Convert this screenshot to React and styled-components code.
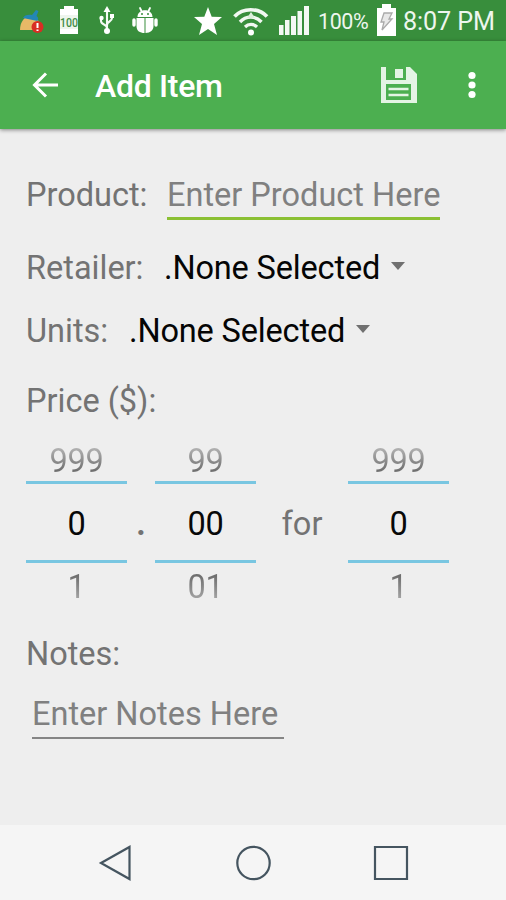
import React from 'react';
import styled, { createGlobalStyle } from 'styled-components';

const GlobalStyle = createGlobalStyle`
  * { box-sizing: border-box; }
  body { margin: 0; background: #eeeeee; font-family: Roboto, sans-serif; }
`;

const Screen = styled.div`
  display: flex;
  flex-direction: column;
  width: 506px;
  height: 900px;
  overflow: hidden;
  background: #eeeeee;
  color: #737373;
  font-size: 32.5px;
  line-height: 40px;
  white-space: nowrap;
`;

const StatusBar = styled.header`
  display: flex;
  align-items: flex-start;
  flex: none;
  height: 41px;
  padding-left: 19px;
  background: #388e3c;
  color: #eef6ee;
`;

const StatusIcon = styled.svg`
  display: block;
  flex: none;
  width: ${(p) => p.$w}px;
  height: 41px;
  margin-right: ${(p) => p.$gap}px;
`;

const StatusText = styled.span`
  flex: none;
  width: ${(p) => p.$w}px;
  margin-right: ${(p) => p.$gap || 0}px;
  padding-top: ${(p) => p.$top}px;
  font-size: ${(p) => p.$size}px;
  line-height: 30px;
  letter-spacing: ${(p) => p.$track || 0}px;
`;

const AppBar = styled.div`
  display: flex;
  align-items: center;
  flex: none;
  height: 88px;
  padding: 0 30px 0 32px;
  background: #4caf50;
  color: #fff;
  box-shadow: 0 1px 4px rgba(0, 0, 0, 0.45);
`;

const BarIcon = styled.svg`
  display: block;
  flex: none;
`;

const Title = styled.h1`
  flex: 1;
  margin: 1px 0 0 36px;
  font-size: 32px;
  font-weight: 500;
  line-height: 38px;
  letter-spacing: -0.3px;
`;

const MoreIcon = styled(BarIcon)`
  margin-left: 51px;
`;

const Form = styled.main`
  display: flex;
  flex-direction: column;
  flex: 1;
  padding: 46px 26px 0;
`;

const Row = styled.div`
  display: flex;
  align-items: flex-start;
  height: ${(p) => p.$h}px;
`;

const Label = styled.span`
  flex: none;
  width: ${(p) => (p.$w ? `${p.$w}px` : 'auto')};
`;

const Field = styled.div`
  width: ${(p) => p.$w}px;
  height: ${(p) => p.$h}px;
  border-bottom: ${(p) => (p.$focused ? '3px solid #8bc034' : '2px solid #858585')};
  color: #808080;
`;

const NotesField = styled(Field)`
  margin-left: 6px;
`;

const Select = styled.div`
  display: flex;
  align-items: flex-start;
  color: #050505;
`;

const SelectValue = styled.span`
  width: 227px;
  letter-spacing: -0.16px;
`;

const Caret = styled.svg`
  display: block;
  width: 14px;
  height: 8px;
  margin-top: 14px;
`;

const Pickers = styled.div`
  display: flex;
  height: 193px;
`;

const Picker = styled.div`
  display: flex;
  flex-direction: column;
  width: 101px;
  height: 164px;
  text-align: center;
  letter-spacing: -0.2px;
`;

const Faded = styled.span`
  height: 38px;
  color: transparent;
  background: linear-gradient(${(p) => (p.$down ? '#6c6c6c 20%, #a4a4a4 85%' : '#b0b0b0 20%, #686868 85%')});
  -webkit-background-clip: text;
  background-clip: text;
`;

const Current = styled.div`
  height: 82px;
  margin: 2px 0 4px;
  padding-top: 20px;
  border-top: 3px solid #79c6e1;
  border-bottom: 3px solid #79c6e1;
  color: #080808;
`;

const Joiner = styled.span`
  width: ${(p) => p.$w}px;
  padding-top: 63px;
  text-align: center;
  font-weight: ${(p) => (p.$bold ? 700 : 400)};
`;

const NavBar = styled.nav`
  display: flex;
  align-items: center;
  flex: none;
  height: 75px;
  padding: 0 97px 0 98px;
  background: #f5f5f5;
  justify-content: space-between;
`;

const NavIcon = styled.svg`
  display: block;
  width: 36px;
  height: 36px;
  fill: none;
  stroke: #455560;
  stroke-width: 2.2;
`;

function NumberPicker({ before, value, after }) {
  return (
    <Picker>
      <Faded>{before}</Faded>
      <Current>{value}</Current>
      <Faded $down>{after}</Faded>
    </Picker>
  );
}

function Dropdown({ value }) {
  return (
    <Select>
      <SelectValue>{value}</SelectValue>
      <Caret viewBox="0 0 14 8"><path d="M0 0h14L7 8z" fill="#707070" /></Caret>
    </Select>
  );
}

function StatusIcons() {
  return (
    <>
      <StatusIcon $w={26} $gap={13} viewBox="0 0 26 41">
        <path d="M1 30C1 22 5 18 8 17l11 3c2 4 0 8-2 10z" fill="#e8b967" />
        <path d="M4 18c1-3 6-4 9-3l4-5 2.500 1-2 5c2 1 2 3 1 5z" fill="#2387b5" />
        <circle cx="18.5" cy="27" r="6" fill="#d92d24" />
        <path d="M18.5 23v5M18.5 29.5v1.5" stroke="#fff" strokeWidth="2" />
      </StatusIcon>
      <StatusIcon $w={22} $gap={19} viewBox="0 0 22 41">
        <path d="M6 6h10v3h4v7H2V9h4zM2 28h18v6H2z" fill="#fff" />
        <path d="M2 15h18v14H2z" fill="#edf5ed" />
        <text x="11" y="26.500" textAnchor="middle" textLength="18" lengthAdjust="spacingAndGlyphs" fontSize="12" fontWeight="500" fill="#438c47">100</text>
      </StatusIcon>
      <StatusIcon $w={16} $gap={17} viewBox="20 0 16 41">
        <g fill="none" stroke="#f4faf4" strokeWidth="2.1">
          <path d="M28 12v18M28 28c0-4-6-3-6-7v-3M28 25c0-4 5-3 5-7v-2" />
        </g>
        <path d="M28 6l3.5 6h-7z" fill="#fff" />
        <circle cx="28" cy="31" r="3" fill="#fff" />
        <circle cx="22.5" cy="18" r="2.2" fill="#fff" />
        <path d="M31 14h4v4h-4z" fill="#fff" />
      </StatusIcon>
      <StatusIcon $w={26} $gap={36} viewBox="0 0 26 41">
        <path d="M5.500 17c0-9 15-9 15 0zM4.500 18h8v15C8 33 4.500 31 4.500 26zM13.500 18h8v8c0 4-3 7-8 7z" fill="#fff" />
        <path d="M8 8l2 4M18 8l-2 4" stroke="#fff" strokeWidth="1.8" strokeLinecap="round" />
        <path d="M2 20v5M24 20v5" stroke="#fff" strokeWidth="3.400" strokeLinecap="round" />
        <circle cx="10" cy="14" r="1" fill="#388e3c" /><circle cx="16" cy="14" r="1" fill="#388e3c" />
      </StatusIcon>
      <StatusIcon $w={28} $gap={11} viewBox="0 0 28 41">
        <path d="M14 7l3.7 9.8L28 17l-8 7 3 11-9-6-9 6 3-11-8-7 10.3-.2z" fill="#fff" />
      </StatusIcon>
      <StatusIcon $w={36} $gap={9} viewBox="0 0 36 41">
        <g fill="none" stroke="#f1f8f1">
          <path d="M1.5 16.5C10 7.5 25.500 7.500 34 16.500" strokeWidth="3.7" />
          <path d="M7 22c6-6.500 15.500-6.500 21.500 0" strokeWidth="3.400" />
          <path d="M12 27c3.500-3.500 8.500-3.500 12 0" strokeWidth="3.200" />
        </g>
        <circle cx="18" cy="32.500" r="3" fill="#fff" />
        <path d="M18 12l4 6H14z" fill="#dcefdc" />
      </StatusIcon>
      <StatusIcon $w={32} $gap={8} viewBox="0 0 32 41">
        <path d="M1 25h4.500v10H1zM7 20h4.500v15H7zM13 16h5v19h-5zM19.500 11h4.500v24h-4.500zM26 6h5v29h-5z" fill="#f4f9f4" />
      </StatusIcon>
    </>
  );
}

export default function App() {
  return (
    <>
      <GlobalStyle />
      <Screen>
        <StatusBar>
          <StatusIcons />
          <StatusText $w={51} $gap={7} $size={21.5} $top={7} $track={-0.4}>100%</StatusText>
          <StatusIcon $w={21} $gap={6} viewBox="0 0 21 41">
            <path d="M6 4h9v4h5v28H1V8h5z" fill="#fff" />
            <path d="M8 13h8l-3 6h3L6 30l2-8H5z" fill="#e8e8e8" stroke="#aaa" strokeWidth="1.300" />
          </StatusIcon>
          <StatusText $w={98} $size={25.2} $top={7} $track={-0.1}>8:07 PM</StatusText>
        </StatusBar>
        <AppBar>
          <BarIcon width="27" height="26" viewBox="0 0 27 26">
            <path d="M14 1.500L2.500 13 14 24.500M2.500 13H26" fill="none" stroke="#fff" strokeWidth="3" />
          </BarIcon>
          <Title>Add Item</Title>
          <BarIcon width="36" height="36" viewBox="0 0 36 36">
            <path fill="#e4f4e4" fillRule="evenodd" d="M0 0h5v13h20V0h4l7 7v29H0zM5 17v16h25V17zM14 2h8v9h-8z" />
            <path d="M7.500 22h20M7.500 28h20" stroke="#e4f4e4" strokeWidth="2.600" />
          </BarIcon>
          <MoreIcon width="8" height="28" viewBox="0 0 8 28">
            <g fill="#fff"><circle cx="4" cy="4.500" r="3.600" /><circle cx="4" cy="14" r="3.600" /><circle cx="4" cy="23.500" r="3.600" /></g>
          </MoreIcon>
        </AppBar>
        <Form>
          <Row $h={73}>
            <Label $w={141}>Product:</Label>
            <Field $focused $w={273} $h={45}>Enter Product Here</Field>
          </Row>
          <Row $h={63}>
            <Label $w={138}>Retailer:</Label>
            <Dropdown value=".None Selected" />
          </Row>
          <Row $h={70}>
            <Label $w={103}>Units:</Label>
            <Dropdown value=".None Selected" />
          </Row>
          <Row $h={60}><Label>Price ($):</Label></Row>
          <Pickers>
            <NumberPicker before="999" value="0" after="1" />
            <Joiner $w={28} $bold>.</Joiner>
            <NumberPicker before="99" value="00" after="01" />
            <Joiner $w={92}>for</Joiner>
            <NumberPicker before="999" value="0" after="1" />
          </Pickers>
          <Row $h={60}><Label>Notes:</Label></Row>
          <NotesField $w={252} $h={45}>Enter Notes Here</NotesField>
        </Form>
        <NavBar>
          <NavIcon viewBox="0 0 36 36"><path d="M3 18L31.500 2v32z" /></NavIcon>
          <NavIcon viewBox="0 0 36 36"><circle cx="17.500" cy="18" r="16.200" /></NavIcon>
          <NavIcon viewBox="0 0 36 36"><path d="M2 2h32v32H2z" /></NavIcon>
        </NavBar>
      </Screen>
    </>
  );
}
